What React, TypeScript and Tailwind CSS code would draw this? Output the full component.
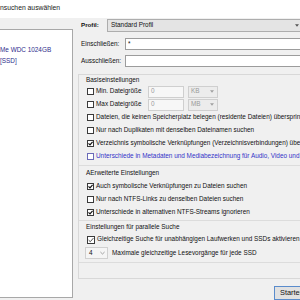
import React from "react";

function Cb({ checked = false, big = false, blue = false }: { checked?: boolean; big?: boolean; blue?: boolean }) {
  const size = big ? "w-[8px] h-[8px]" : "w-[7px] h-[7px]";
  const border = blue ? "border-[#6a6ab8]" : "border-[#3a3a3a]";
  return (
    <span className={`relative ${size} border ${border} bg-white shrink-0 flex items-center justify-center`}>
      {checked &&
        (big ? (
          <svg viewBox="0 0 6 6" className="w-[6px] h-[6px]">
            <path d="M0.6 3.1 L2.3 4.7 L5.4 1.1" stroke="#222" strokeWidth="0.8" fill="none" />
          </svg>
        ) : (
          <svg viewBox="0 0 5 5" className="w-[5px] h-[5px]">
            <path d="M0.5 2.4 L2 3.9 L4.6 0.9" stroke="#111" strokeWidth="1.2" fill="none" />
          </svg>
        ))}
    </span>
  );
}

function Row({ checked = false, blue = false, children }: { checked?: boolean; blue?: boolean; children: React.ReactNode }) {
  return (
    <div className="flex items-center h-[13px] pl-[8px]">
      <Cb checked={checked} blue={blue} />
      <span className={`ml-[2px] whitespace-nowrap ${blue ? "text-[#3232c8]" : "text-[#111]"}`}>{children}</span>
    </div>
  );
}

function SizeRow({ label, unit }: { label: string; unit: string }) {
  return (
    <div className="flex items-center h-[13px] pl-[8px]">
      <Cb />
      <span className="ml-[2px] w-[52px] whitespace-nowrap text-[#111]">{label}</span>
      <div className="w-[36px] h-[12px] border border-[#cfcfcf] bg-[#f7f7f7] flex items-center pl-[2px] text-[#9a9a9a]">0</div>
      <div className="ml-[4px] w-[30px] h-[12px] border border-[#cfcfcf] bg-[#ececec] flex items-center justify-between pl-[2px] pr-[3px] text-[#9a9a9a]">
        <span>{unit}</span>
        <svg viewBox="0 0 5 3" className="w-[4px] h-[3px]">
          <path d="M0 0 L5 0 L2.5 3 Z" fill="#a0a0a0" />
        </svg>
      </div>
    </div>
  );
}

export default function App() {
  return (
    <div className="w-[300px] h-[300px] overflow-hidden bg-[#f0f0f0] font-['Liberation_Sans',Arial,sans-serif] text-[6.4px] leading-none text-[#111]">
      <div className="h-[18px] bg-white flex items-center pb-[1px]">
        <span className="text-[6.8px] whitespace-nowrap text-[#1a1a1a]">nsuchen auswählen</span>
      </div>
      <div className="flex h-[282px]">
        <div className="w-[73px] shrink-0 pt-[11px]">
          <div className="h-[269px] border border-l-0 border-[#a8a8a8] bg-white pt-[15px] text-[#2e2e8c]">
            <div className="h-[11px] flex items-center whitespace-nowrap">Me WDC 1024GB</div>
            <div className="h-[11px] flex items-center whitespace-nowrap">[SSD]</div>
          </div>
        </div>
        <div className="flex-1 flex flex-col">
          <div className="mt-[1px] h-[13px] flex items-center">
            <span className="ml-[8px] w-[26px] font-bold text-[6.2px]">Profil:</span>
            <div className="w-[196px] h-[13px] border border-[#adadad] bg-[#e4e4e4] flex items-center justify-between pl-[3px] pr-[3px]">
              <span className="whitespace-nowrap">Standard Profil</span>
              <svg viewBox="0 0 5 3" className="w-[4px] h-[3px]">
                <path d="M0 0 L5 0 L2.5 3 Z" fill="#555" />
              </svg>
            </div>
          </div>
          <div className="mt-[6px] h-[12px] flex items-center">
            <span className="ml-[8px] w-[44px] whitespace-nowrap">Einschließen:</span>
            <div className="w-[180px] h-[12px] border border-[#9c9c9c] bg-white flex items-center pl-[2px]">*</div>
          </div>
          <div className="mt-[5px] h-[12px] flex items-center">
            <span className="ml-[8px] w-[44px] whitespace-nowrap">Ausschließen:</span>
            <div className="w-[180px] h-[12px] border border-[#9c9c9c] bg-white" />
          </div>
          <div className="mt-[7px] ml-[5px] w-[240px] h-[207px] border border-[#d8d8d8] flex flex-col">
            <div className="h-[10px] flex items-center pl-[7px] whitespace-nowrap">Basiseinstellungen</div>
            <SizeRow label="Min. Dateigröße" unit="KB" />
            <SizeRow label="Max Dateigröße" unit="MB" />
            <Row>Dateien, die keinen Speicherplatz belegen (residente Dateien) überspringen</Row>
            <Row>Nur nach Duplikaten mit denselben Dateinamen suchen</Row>
            <Row checked>Verzeichnis symbolische Verknüpfungen (Verzeichnisverbindungen) überspringen</Row>
            <Row blue>Unterschiede in Metadaten und Mediabezeichnung für Audio, Video und Bilder ignorieren</Row>
            <div className="mt-[2px] h-px bg-[#dcdcdc]" />
            <div className="h-[14px] flex items-center pl-[7px] whitespace-nowrap">AErweiterte Einstellungen</div>
            <Row checked>Auch symbolische Verknüpfungen zu Dateien suchen</Row>
            <Row>Nur nach NTFS-Links zu denselben Dateien suchen</Row>
            <Row checked>Unterschiede in alternativen NTFS-Streams ignorieren</Row>
            <div className="mt-[1px] h-px bg-[#dcdcdc]" />
            <div className="h-[12px] flex items-center pl-[7px] whitespace-nowrap">Einstellungen für parallele Suche</div>
            <div className="flex items-center h-[13px] pl-[8px]">
              <Cb checked big />
              <span className="ml-[2px] whitespace-nowrap">Gleichzeitige Suche für unabhängigen Laufwerken und SSDs aktivieren</span>
            </div>
            <div className="flex items-center h-[14px] pl-[6px]">
              <div className="w-[23px] h-[12px] border border-[#d0d0d0] bg-[#f5f5f5] flex items-center justify-between pl-[3px] pr-[2px]">
                <span>4</span>
                <svg viewBox="0 0 6 4" className="w-[5px] h-[4px]">
                  <path d="M0.5 0.8 L3 3.2 L5.5 0.8" stroke="#777" strokeWidth="0.8" fill="none" />
                </svg>
              </div>
              <span className="ml-[4px] whitespace-nowrap">Maximale gleichzeitige Lesevorgänge für jede SSD</span>
            </div>
            <div className="mt-[2px] h-px bg-[#dcdcdc]" />
          </div>
          <div className="mt-[7px] flex">
            <div className="ml-[201px] w-[40px] h-[14px] border border-[#5a8ccc] bg-[#e1e1e1] flex items-center pl-[5px] whitespace-nowrap text-[7.4px]">
              Starten
            </div>
          </div>
        </div>
      </div>
    </div>
  );
}
